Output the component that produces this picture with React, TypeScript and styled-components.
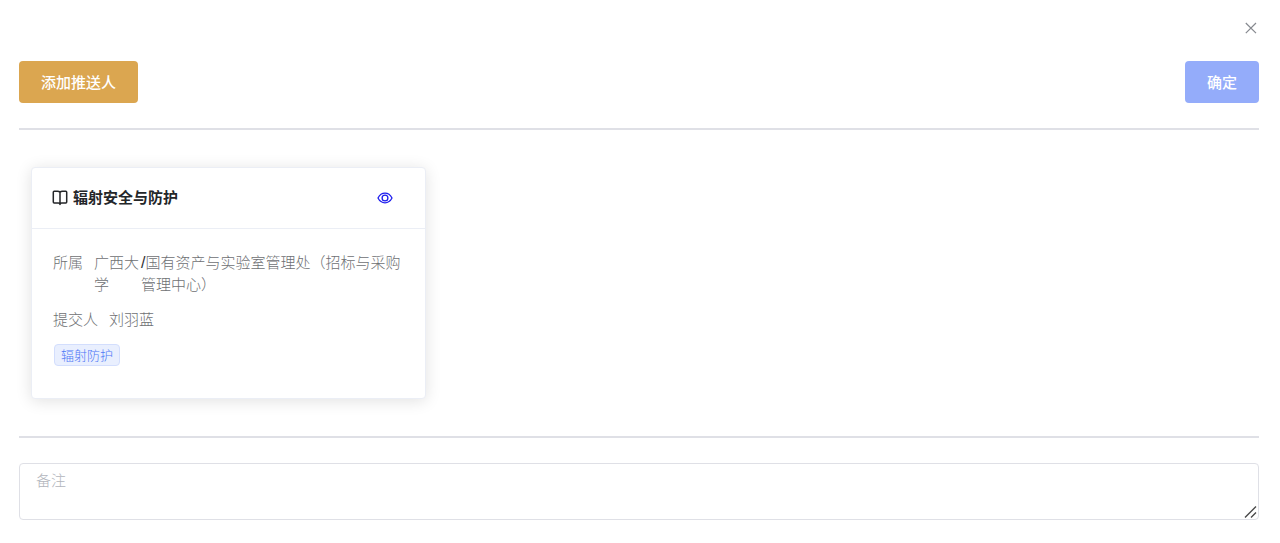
import React from "react";
import styled, { createGlobalStyle } from "styled-components";

const GlobalStyle = createGlobalStyle`
  *, *::before, *::after { box-sizing: border-box; }
  body {
    margin: 0;
    background: #fff;
    color: #6e7073;
    font-family: "Noto Sans CJK SC", sans-serif;
    font-size: 15px;
    font-weight: 300;
    line-height: 22px;
  }
`;

const Dialog = styled.main`
  display: flex;
  flex-direction: column;
  padding: 20px 21px 23px 19px;
`;

const DialogHeader = styled.header`
  display: flex;
  justify-content: flex-end;
  margin-bottom: 25px;
`;

const IconButton = styled.button<{ $color: string }>`
  display: flex;
  align-items: center;
  justify-content: center;
  width: 16px;
  height: 16px;
  padding: 0;
  border: 0;
  background: none;
  color: ${(p) => p.$color};
  cursor: pointer;
`;

const Toolbar = styled.div`
  display: flex;
  justify-content: space-between;
`;

const Button = styled.button<{ $color: string }>`
  height: 42px;
  padding: 0 22px;
  border: 0;
  border-radius: 4px;
  background: ${(p) => p.$color};
  color: #fff;
  font: inherit;
  font-weight: 500;
  cursor: pointer;
`;

const Divider = styled.hr`
  width: 100%;
  height: 2px;
  margin: 25px 0;
  border: 0;
  background: #dfe0e6;
`;

const CardGrid = styled.section`
  display: grid;
  grid-template-columns: repeat(3, 1fr);
  gap: 16px;
  padding: 12px;
`;

const Card = styled.article`
  border: 1px solid #ebeef5;
  border-radius: 4px;
  background: #fff;
  box-shadow: 0 2px 16px rgba(0, 0, 0, 0.12);
`;

const CardHeader = styled.header`
  display: flex;
  align-items: center;
  height: 61px;
  padding: 0 32px 0 20px;
  border-bottom: 1px solid #ebeef5;
  color: #242629;
`;

const CardTitle = styled.h2`
  flex: 1;
  margin: 0 0 0 5px;
  padding-bottom: 2px;
  font-size: 15px;
  font-weight: 700;
`;

const CardBody = styled.div`
  display: flex;
  flex-direction: column;
  align-items: flex-start;
  gap: 13px;
  padding: 22px 21px 31px;
`;

const Field = styled.div`
  display: flex;
`;

const Label = styled.span`
  flex: none;
  margin-right: 11px;
`;

const School = styled.span`
  flex: none;
  width: 47px;
`;

const Slash = styled.span`
  color: #303133;
  font-family: "Liberation Sans", sans-serif;
  font-size: 16px;
  line-height: 1;
`;

const Tag = styled.span`
  height: 22px;
  margin: 1px;
  padding: 0 6px;
  border: 1px solid #d3defd;
  border-radius: 4px;
  background: #e9effe;
  color: #4f78f6;
  font-size: 13px;
  line-height: 20px;
`;

const NoteBox = styled.div`
  position: relative;
  display: flex;
`;

const Note = styled.textarea`
  width: 100%;
  height: 57px;
  padding: 5px 16px;
  border: 1px solid #dfe0e6;
  border-radius: 4px;
  outline: 0;
  resize: none;
  font: inherit;
  color: #606266;
  &::placeholder { color: #b2b5bc; }
`;

const Grip = styled.svg`
  position: absolute;
  right: 1px;
  bottom: 1px;
  pointer-events: none;
`;

const CloseIcon = () => (
  <svg width="16" height="16" viewBox="0 0 16 16" fill="none" stroke="currentColor" strokeWidth="1.2" aria-hidden="true">
    <path d="M2.8 3 13 13.2M13 3 2.8 13.2" />
  </svg>
);

const BookIcon = () => (
  <svg width="16" height="16" viewBox="0 0 16 16" fill="none" stroke="currentColor" strokeWidth="1.5" aria-hidden="true">
    <path d="M8 2.4C7.4 1.6 6.6 1.3 5.5 1.3H2.2Q1.3 1.3 1.3 2.2V12Q1.3 12.9 2.2 12.9H6.2Q7.6 12.9 8 13.7Q8.4 12.9 9.8 12.9H13.8Q14.7 12.9 14.7 12V2.2Q14.7 1.3 13.8 1.3H10.5C9.4 1.3 8.6 1.6 8 2.4V15" />
  </svg>
);

const EyeIcon = () => (
  <svg width="16" height="16" viewBox="0 0 16 16" fill="none" stroke="currentColor" strokeWidth="1.3" aria-hidden="true">
    <path d="M1 8C2.7 4.7 5 3.2 8 3.2S13.3 4.7 15 8C13.3 11.3 11 12.8 8 12.8S2.7 11.3 1 8Z" />
    <circle cx="8" cy="8" r="2.9" />
  </svg>
);

export default function App() {
  return (
    <>
      <GlobalStyle />
      <Dialog>
        <DialogHeader>
          <IconButton type="button" $color="#86898f" aria-label="关闭">
            <CloseIcon />
          </IconButton>
        </DialogHeader>
        <Toolbar>
          <Button type="button" $color="#dba650">添加推送人</Button>
          <Button type="button" $color="#94acfa">确定</Button>
        </Toolbar>
        <Divider />
        <CardGrid>
          <Card>
            <CardHeader>
              <BookIcon />
              <CardTitle>辐射安全与防护</CardTitle>
              <IconButton type="button" $color="#1c1cee" aria-label="查看">
                <EyeIcon />
              </IconButton>
            </CardHeader>
            <CardBody>
              <Field>
                <Label>所属</Label>
                <School>广西大学</School>
                <span><Slash>/</Slash>国有资产与实验室管理处（招标与采购管理中心）</span>
              </Field>
              <Field>
                <Label>提交人</Label>
                <span>刘羽蓝</span>
              </Field>
              <Tag>辐射防护</Tag>
            </CardBody>
          </Card>
        </CardGrid>
        <Divider />
        <NoteBox>
          <Note placeholder="备注" aria-label="备注" />
          <Grip width="14" height="14" viewBox="0 0 14 14" fill="none" stroke="#4a4a4a" strokeWidth="1.4" aria-hidden="true">
            <path d="M1 12.5 12 1.5M7 12.5 12 7.5" />
          </Grip>
        </NoteBox>
      </Dialog>
    </>
  );
}
